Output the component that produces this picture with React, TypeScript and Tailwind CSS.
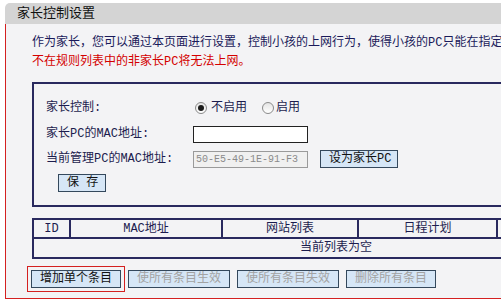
import React from "react";

const font = {
  fontFamily: '"Liberation Mono", "Noto Sans CJK SC", monospace',
};

const btnClass =
  "h-[18px] whitespace-nowrap border border-[#34485c] bg-[#d6e6f6] px-[8px] text-[12px] leading-[16px]";

function Radio({ checked }: { checked?: boolean }) {
  return (
    <span className="flex h-[12px] w-[12px] items-center justify-center rounded-full border border-[#8a8a8a] bg-[linear-gradient(#e4e4e4,#ffffff)]">
      {checked && <span className="h-[6px] w-[6px] rounded-full bg-[#1a1a1a]" />}
    </span>
  );
}

export default function App() {
  return (
    <div
      className="h-[301px] w-[501px] overflow-hidden whitespace-nowrap bg-white pl-[5px] pt-[3px] text-[#1c1c4e]"
      style={font}
    >
      <div className="w-[700px]">
        <div className="flex h-[21px] items-center rounded-tl-[5px] bg-[#d4d4d4] pl-[12px] text-[13px] text-[#111]">
          家长控制设置
        </div>

        <div className="h-[275px] border-b border-l border-[#d42020] bg-[#f3f3f5] pl-[26px] pt-[10px]">
          <p className="text-[12px] leading-[19px] text-[#1a1a5a]">
            作为家长，您可以通过本页面进行设置，控制小孩的上网行为，使得小孩的PC只能在指定时间访问指定的网站。
          </p>
          <p className="text-[12px] leading-[19px] text-[#d40000]">
            不在规则列表中的非家长PC将无法上网。
          </p>

          <div className="mt-[10px] w-[608px] border-2 border-[#29295e] pb-[13px] pl-[12px] pt-[11px] text-[12px]">
            <div className="flex h-[26px] items-center">
              <span className="w-[147px]">家长控制:</span>
              <span className="ml-[2px] flex items-center gap-[4px]">
                <Radio checked />
                不启用
              </span>
              <span className="ml-[15px] flex items-center gap-[2px]">
                <Radio />
                启用
              </span>
            </div>
            <div className="flex h-[26px] items-center">
              <span className="w-[147px]">家长PC的MAC地址:</span>
              <input className="h-[17px] w-[115px] border border-[#222] bg-white" />
            </div>
            <div className="flex h-[24px] items-center">
              <span className="w-[147px]">当前管理PC的MAC地址:</span>
              <input
                disabled
                value="50-E5-49-1E-91-F3"
                className="h-[17px] w-[115px] border border-[#9a9a9a] bg-[#f0f0f0] pl-[2px] text-[10px] text-[#8a8a8a]"
                style={{ fontFamily: '"Liberation Mono", monospace' }}
              />
              <button className={`${btnClass} ml-[12px] w-[78px] px-0 text-[#111]`}>
                设为家长PC
              </button>
            </div>
            <button className={`${btnClass} ml-[12px] mt-[3px] block w-[48px] px-0 text-[#111]`}>
              保 存
            </button>
          </div>

          <div className="mt-[11px] grid w-[606px] grid-cols-[35px_150px_134px_137px_70px_68px] gap-[2px] border-2 border-[#29295e] bg-[#29295e] text-[12px]">
            {["ID", "MAC地址", "网站列表", "日程计划", "状态", "编辑"].map((h) => (
              <div key={h} className="flex h-[17px] items-center justify-center bg-[#f3f3f5]">
                {h}
              </div>
            ))}
            <div className="col-span-6 flex h-[18px] items-center justify-center bg-[#f3f3f5]">
              当前列表为空
            </div>
          </div>

          <div className="-ml-px mt-[11px] flex gap-[7px]">
            <button
              className={`${btnClass} text-[#111] outline outline-1 outline-offset-[3px] outline-[#d42020]`}
            >
              增加单个条目
            </button>
            <button disabled className={`${btnClass} text-[#a3a3a3]`}>
              使所有条目生效
            </button>
            <button disabled className={`${btnClass} text-[#a3a3a3]`}>
              使所有条目失效
            </button>
            <button disabled className={`${btnClass} text-[#a3a3a3]`}>
              删除所有条目
            </button>
          </div>
        </div>
      </div>
    </div>
  );
}
